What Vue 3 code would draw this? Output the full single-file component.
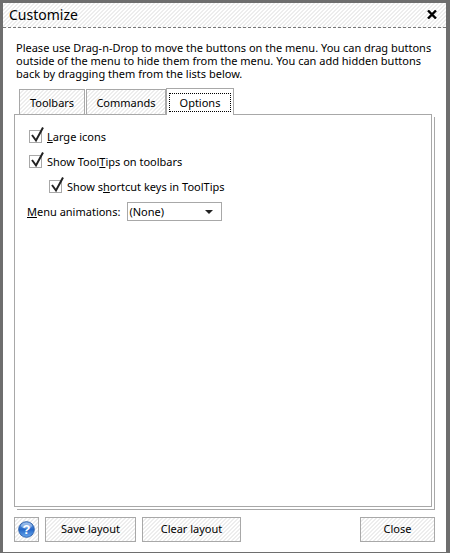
<template>
  <div class="window">
    <div class="title-bar">
      <span class="title">Customize</span>
      <svg class="close-x" width="10" height="9" viewBox="0 0 10 9">
        <path d="M1 0.5 L9 8.5 M9 0.5 L1 8.5" stroke="#000" stroke-width="2.4" fill="none" />
      </svg>
    </div>

    <div class="body">
      <p class="intro">
        Please use Drag-n-Drop to move the buttons on the menu. You can drag buttons
        outside of the menu to hide them from the menu. You can add hidden buttons
        back by dragging them from the lists below.
      </p>

      <div class="tabs">
        <div v-for="tab in tabs" :key="tab" class="tab" :class="{ active: tab === activeTab }">
          <span class="tab-label">{{ tab }}</span>
        </div>
      </div>

      <div class="panel">
        <div class="panel-inner">
          <label class="check-row">
            <span class="check-box"><svg width="17" height="17" viewBox="0 0 17 17"><path d="M3 8 L7 13.5 L14 0.5" stroke="#222" stroke-width="2" fill="none" /></svg></span>
            <span><u>L</u>arge icons</span>
          </label>
          <label class="check-row">
            <span class="check-box"><svg width="17" height="17" viewBox="0 0 17 17"><path d="M3 8 L7 13.5 L14 0.5" stroke="#222" stroke-width="2" fill="none" /></svg></span>
            <span>Show Tool<u>T</u>ips on toolbars</span>
          </label>
          <label class="check-row nested">
            <span class="check-box"><svg width="17" height="17" viewBox="0 0 17 17"><path d="M3 8 L7 13.5 L14 0.5" stroke="#222" stroke-width="2" fill="none" /></svg></span>
            <span>Show s<u>h</u>ortcut keys in ToolTips</span>
          </label>
          <div class="select-row">
            <span class="select-label"><u>M</u>enu animations:</span>
            <div class="select">
              <span>(None)</span>
              <span class="arrow"></span>
            </div>
          </div>
        </div>
      </div>

      <div class="footer">
        <button class="btn help-btn">
          <svg width="17" height="17" viewBox="0 0 17 17">
            <defs>
              <linearGradient id="helpFill" x1="0" y1="0" x2="0" y2="1">
                <stop offset="0" stop-color="#6fa3e6" />
                <stop offset="0.5" stop-color="#2467c8" />
                <stop offset="1" stop-color="#6aa8ee" />
              </linearGradient>
            </defs>
            <circle cx="8.5" cy="8.5" r="7.8" fill="url(#helpFill)" stroke="#2f62ac" />
            <ellipse cx="8.5" cy="4.6" rx="5.6" ry="3" fill="#fff" opacity="0.35" />
            <text x="8.5" y="13" text-anchor="middle" class="help-mark">?</text>
          </svg>
        </button>
        <button class="btn save-btn">Save layout</button>
        <button class="btn clear-btn">Clear layout</button>
        <button class="btn close-btn">Close</button>
      </div>
    </div>
  </div>
</template>

<script setup>
const tabs = ['Toolbars', 'Commands', 'Options']
const activeTab = 'Options'
</script>

<style>
html, body {
  margin: 0;
  background: #fff;
}
</style>

<style scoped>
.window {
  --hatch: repeating-linear-gradient(135deg, #ffffff 0, #ffffff 1.5px, #ededed 1.5px, #ededed 2.83px);
  box-sizing: border-box;
  width: 450px;
  height: 553px;
  border: solid #6e6e6e;
  border-width: 3px 4px 1px 3px;
  background: #fff;
  display: flex;
  flex-direction: column;
  font-family: "Noto Sans", sans-serif;
  font-size: 11px;
  color: #000;
}

.title-bar {
  box-sizing: border-box;
  height: 25px;
  flex-shrink: 0;
  display: flex;
  align-items: center;
  justify-content: space-between;
  padding: 0 9px 2px 6px;
  background: var(--hatch);
  border-bottom: 1px dashed #777;
}

.title {
  font-size: 14px;
}

.close-x {
  display: block;
}

.body {
  flex: 1;
  display: flex;
  flex-direction: column;
  padding: 13px 11px 10px 11px;
  min-height: 0;
}

.intro {
  margin: 0 0 0 2px;
  line-height: 13px;
}

.tabs {
  display: flex;
  align-items: flex-end;
  margin: 8px 0 0 5px;
  position: relative;
  z-index: 1;
}

.tab {
  box-sizing: border-box;
  height: 25px;
  border: 1px solid #a8a8a8;
  border-bottom: 0;
  display: flex;
  align-items: center;
  justify-content: center;
  background: var(--hatch);
  margin-right: 1px;
}

.tab:nth-child(1) { width: 66px; }
.tab:nth-child(2) { width: 80px; margin-right: 0; }

.tab.active {
  width: 68px;
  height: 27px;
  margin-bottom: -1px;
  background: #fff;
  padding: 3px 2px 2px 2px;
}

.tab.active .tab-label {
  flex: 1;
  text-align: center;
  line-height: 19px;
  outline: 1px dotted #000;
  outline-offset: -1px;
}

.panel {
  flex: 1;
  position: relative;
  margin-right: 3px;
  margin-bottom: 2px;
  min-height: 0;
}

.panel::after {
  content: "";
  position: absolute;
  left: 3px;
  top: 3px;
  right: -3px;
  bottom: -3px;
  border: 1px solid #a8a8a8;
  border-left: 0;
  border-top: 0;
}

.panel-inner {
  box-sizing: border-box;
  height: 100%;
  border: 1px solid #a8a8a8;
  background: #fff;
  padding: 13px 0 0 14px;
  display: flex;
  flex-direction: column;
  align-items: flex-start;
}

.check-row {
  display: flex;
  align-items: center;
  gap: 5px;
  height: 17px;
  margin-bottom: 8px;
}

.check-row.nested {
  margin-left: 20px;
  margin-bottom: 7px;
}

.check-box {
  box-sizing: border-box;
  width: 13px;
  height: 13px;
  border: 1px solid #a8a8a8;
  position: relative;
  flex-shrink: 0;
}

.check-box svg {
  position: absolute;
  left: -1px;
  top: -4px;
}

.select-row {
  display: flex;
  align-items: center;
  gap: 7px;
  margin-left: -2px;
}

.select {
  box-sizing: border-box;
  width: 95px;
  height: 19px;
  border: 1px solid #a8a8a8;
  display: flex;
  align-items: center;
  justify-content: space-between;
  padding: 0 8px 0 1px;
}

.arrow {
  width: 0;
  height: 0;
  border: solid transparent;
  border-width: 4px 4px 0 4px;
  border-top-color: #222;
}

.footer {
  display: flex;
  align-items: stretch;
  height: 25px;
  margin-top: 8px;
}

.btn {
  box-sizing: border-box;
  border: 1px solid #a8a8a8;
  background: var(--hatch);
  font: inherit;
  color: #000;
  padding: 0 0 2px;
}

.help-btn {
  width: 25px;
  margin-right: 6px;
  padding: 0;
  display: flex;
  align-items: center;
  justify-content: center;
}

.help-mark {
  font-family: "Liberation Sans", sans-serif;
  font-size: 13px;
  font-weight: 700;
  fill: #fff;
}

.save-btn {
  width: 91px;
  margin-right: 6px;
}

.clear-btn {
  width: 99px;
}

.close-btn {
  width: 75px;
  margin-left: auto;
}
</style>
